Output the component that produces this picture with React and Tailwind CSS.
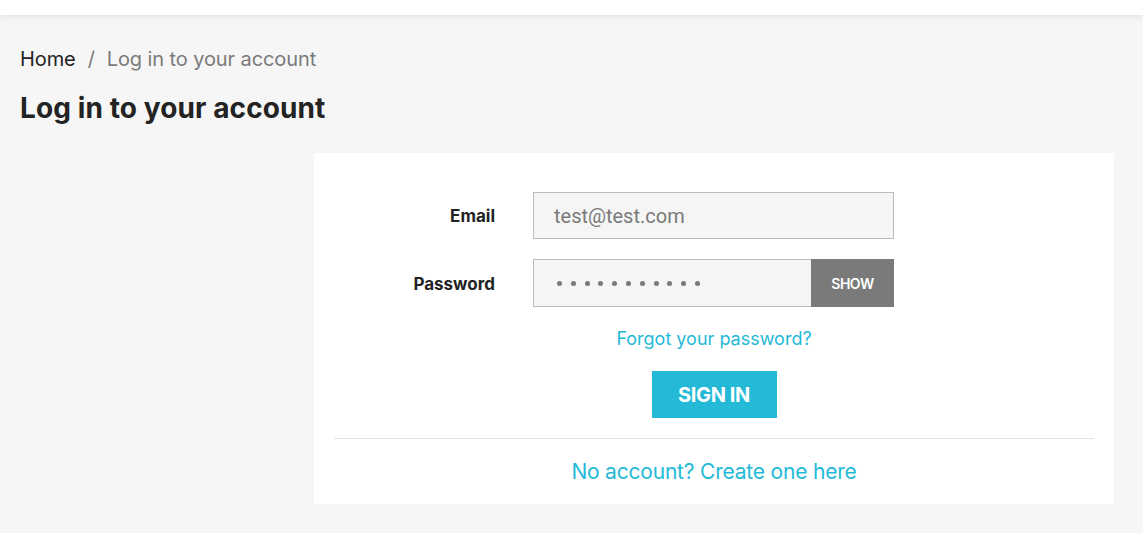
import React from 'react';

function Field({ label, children }) {
  return (
    <div className="flex items-center">
      <label className="w-[181px] pr-[20px] pt-[3px] text-right text-[17px] font-bold text-[#232323]">{label}</label>
      <div className="ml-[18px] w-[361px]">{children}</div>
    </div>
  );
}

export default function App() {
  return (
    <div className="min-h-[533px] bg-[#f6f6f6] font-['Inter',sans-serif] text-[#232323]">
      <div className="h-[15px] bg-white shadow-[0_2px_6px_rgba(0,0,0,0.08)]" />

      <div className="px-[20px]">
        <nav className="mt-[32px] flex items-center text-[20px] leading-[24px] tracking-[-0.1px]">
          <span className="text-[#232323]">Home</span>
          <span className="mx-[12px] text-[#7a7a7a]">/</span>
          <span className="text-[#7a7a7a]">Log in to your account</span>
        </nav>

        <h1 className="mt-[21px] text-[28px] font-bold leading-[32px] tracking-[0.1px] text-[#232323]">
          Log in to your account
        </h1>

        <div className="ml-[294px] mt-[29px] w-[800px] bg-white px-[20px] pt-[39px]">
          <div className="flex flex-col gap-[20px]">
            <Field label="Email">
              <div className="flex h-[47px] items-center border border-[#bbbbbb] bg-[#f5f5f5] px-[20px] font-['Roboto',sans-serif] text-[20px] text-[#7a7a7a]">
                test@test.com
              </div>
            </Field>
            <Field label="Password">
              <div className="flex h-[48px]">
                <div className="flex flex-1 items-center border border-r-0 border-[#bbbbbb] bg-[#f5f5f5] pl-[23px]">
                  <div className="flex gap-[8.8px]">
                    {Array.from({ length: 11 }).map((_, i) => (
                      <span key={i} className="h-[5px] w-[5px] rounded-full bg-[#7a7a7a]" />
                    ))}
                  </div>
                </div>
                <button className="w-[83px] bg-[#7a7a7a] text-[14px] font-semibold tracking-[-0.5px] text-white">
                  SHOW
                </button>
              </div>
            </Field>
          </div>

          <div className="mt-[21px] flex flex-col items-center">
            <a className="text-[18px] leading-[22px] tracking-[0px] text-[#24b9d7]">Forgot your password?</a>
            <button className="mt-[21px] h-[47px] w-[125px] bg-[#24b9d7] text-[20px] font-bold tracking-[-0.4px] text-white">
              SIGN IN
            </button>
          </div>

          <div className="mt-[20px] border-t border-[#e5e5e5]" />
          <div className="flex h-[65px] items-center justify-center text-[21px] tracking-[-0.2px] text-[#24b9d7]">
            No account? Create one here
          </div>
        </div>
      </div>
    </div>
  );
}
